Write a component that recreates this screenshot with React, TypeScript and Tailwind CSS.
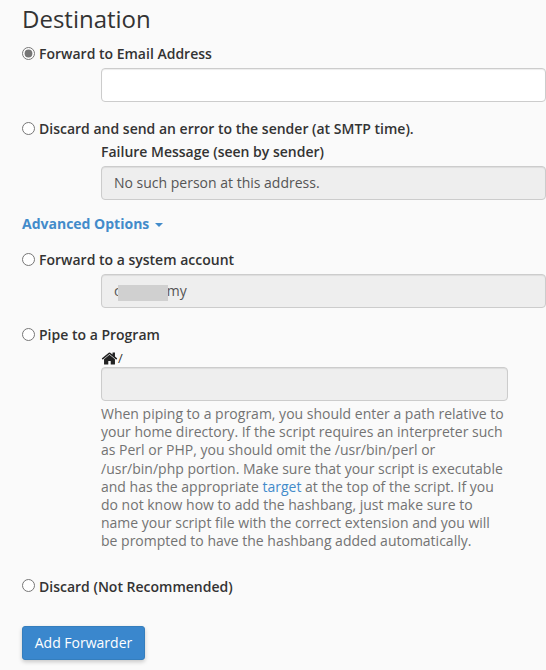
function RadioRow({ label, checked, className }: { label: string; checked?: boolean; className?: string }) {
  return (
    <label className={`flex h-5 items-center ${className ?? ""}`}>
      <input type="radio" name="fwdopt" defaultChecked={checked} className="m-0 mr-1 h-[13px] w-[13px] accent-[#757575]" />
      <span className="pt-[2px] font-[580]">{label}</span>
    </label>
  );
}

function HomeIcon() {
  return (
    <svg viewBox="0 0 1792 1792" className="h-[17px] w-[17px] fill-[#222]">
      <path d="M1472 992v480q0 26-19 45t-45 19h-384v-384h-256v384h-384q-26 0-45-19t-19-45v-480q0-1 .5-3t.5-3l575-474 575 474q1 2 1 6zm223-69l-62 74q-8 9-21 11h-3q-13 0-21-7l-692-577-692 577q-12 8-24 7-13-2-21-11l-62-74q-8-10-7-23.500t11-21.500l719-599q32-26 76-26t76 26l244 204v-195q0-14 9-23t23-9h192q14 0 23 9t9 23v408l219 182q10 8 11 21.500t-7 23.500z" />
    </svg>
  );
}

export default function App() {
  return (
    <div className="h-[670px] w-[546px] overflow-hidden bg-[#fafafa] pl-[22px] font-['Open_Sans',sans-serif] text-sm leading-5 text-[#333]">
      <h2 className="mt-[2px] text-2xl leading-[34px] font-normal">Destination</h2>

      <RadioRow label="Forward to Email Address" checked className="mt-[7px]" />
      <div className="ml-[79px] mt-[5px]">
        <input type="text" className="block h-[34px] w-[445px] rounded border border-[#ccc] bg-white px-3 shadow-[inset_0_1px_1px_rgba(0,0,0,0.075)]" />
      </div>

      <RadioRow label="Discard and send an error to the sender (at SMTP time)." className="mt-[16px]" />
      <div className="ml-[79px] mt-1">
        <div className="font-[580]">Failure Message (seen by sender)</div>
        <div className="mt-1 flex h-[34px] w-[445px] items-center rounded border border-[#ccc] bg-[#eee] px-3 text-[#555] shadow-[inset_0_1px_1px_rgba(0,0,0,0.075)]">
          No such person at this address.
        </div>
      </div>

      <div className="mt-[14px] flex h-5 items-center font-bold text-[#428bca]">
        Advanced Options
        <span className="ml-[6px] mt-[2px] h-0 w-0 border-x-4 border-t-4 border-x-transparent border-t-[#428bca]" />
      </div>

      <RadioRow label="Forward to a system account" className="mt-[15px]" />
      <div className="ml-[79px] mt-[5px]">
        <div className="relative flex h-[34px] w-[445px] items-center rounded border border-[#ccc] bg-[#eee] px-3 text-[#555] shadow-[inset_0_1px_1px_rgba(0,0,0,0.075)]">
          <span>c</span>
          <span className="ml-[46px]">my</span>
          <span className="absolute left-[16px] top-[10px] h-4 w-[50px] bg-[#d0d0d0]" />
        </div>
      </div>

      <RadioRow label="Pipe to a Program" className="mt-[16px]" />
      <div className="ml-[79px] mt-[5px]">
        <div className="flex h-[18px] items-center text-[#333]">
          <HomeIcon />
          <span className="text-[13px]">/</span>
        </div>
        <div className="h-[34px] w-[407px] rounded border border-[#ccc] bg-[#eee] shadow-[inset_0_1px_1px_rgba(0,0,0,0.075)]" />
        <p className="mt-1 w-[407px] leading-[18.2px] text-[#737373]">
          When piping to a program, you should enter a path relative to your home directory. If the script requires an interpreter such as Perl or PHP, you should omit the /usr/bin/perl or /usr/bin/php portion. Make sure that your script is executable and has the appropriate <span className="text-[#428bca]">target</span> at the top of the script. If you do not know how to add the hashbang, just make sure to name your script file with the correct extension and you will be prompted to have the hashbang added automatically.
        </p>
      </div>

      <RadioRow label="Discard (Not Recommended)" className="mt-[25px]" />

      <button type="button" className="mt-[30px] block h-[34px] w-[123px] rounded-[3px] border border-[#357ebd] bg-[#3a87cd] text-center text-sm text-white shadow-[0_2px_4px_rgba(0,0,0,0.2)]">
        Add Forwarder
      </button>
    </div>
  );
}
